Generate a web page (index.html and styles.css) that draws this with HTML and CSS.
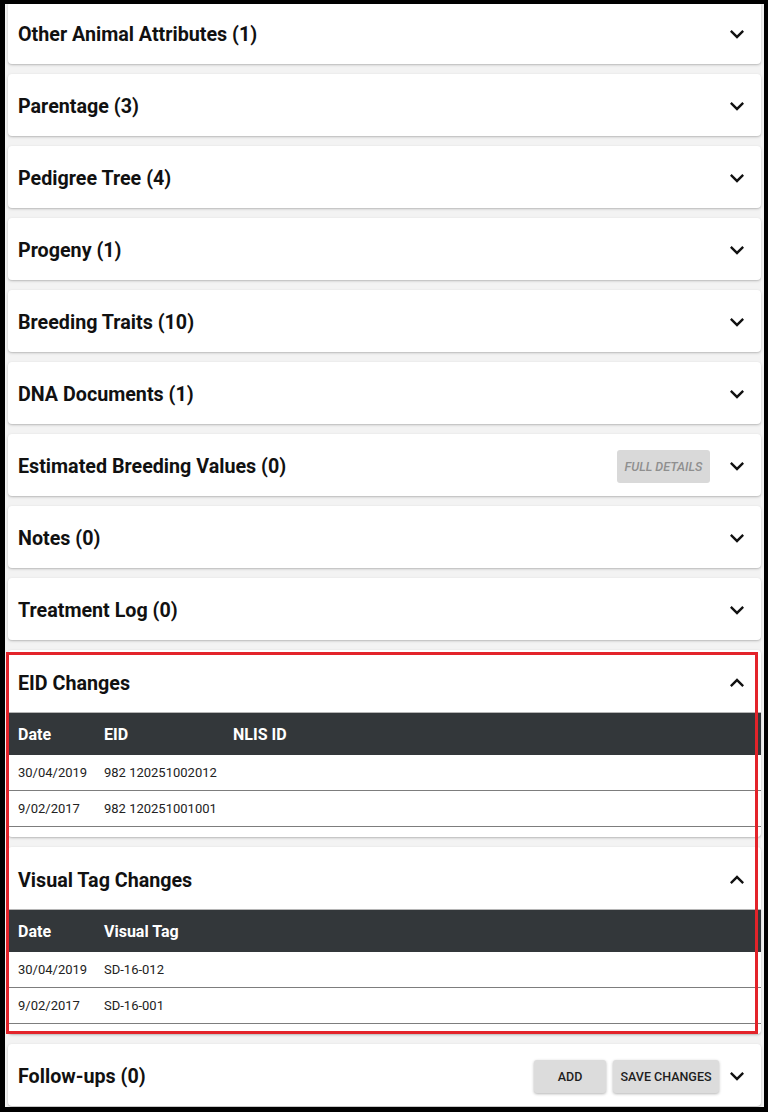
FILE: index.html
```html
<!DOCTYPE html>
<html lang="en">
<head>
<meta charset="utf-8">
<title>Animal details</title>
<link rel="stylesheet" href="styles.css">
</head>
<body>
<div class="screen">
  <div class="list">
    <section class="panel"><div class="summary"><h2 class="title">Other Animal Attributes (1)</h2><svg class="chev" viewBox="0 0 24 24"><path d="M16.59 8.59L12 13.17 7.41 8.59 6 10l6 6 6-6z"/></svg></div></section>
    <section class="panel"><div class="summary"><h2 class="title">Parentage (3)</h2><svg class="chev" viewBox="0 0 24 24"><path d="M16.59 8.59L12 13.17 7.41 8.59 6 10l6 6 6-6z"/></svg></div></section>
    <section class="panel"><div class="summary"><h2 class="title">Pedigree Tree (4)</h2><svg class="chev" viewBox="0 0 24 24"><path d="M16.59 8.59L12 13.17 7.41 8.59 6 10l6 6 6-6z"/></svg></div></section>
    <section class="panel"><div class="summary"><h2 class="title">Progeny (1)</h2><svg class="chev" viewBox="0 0 24 24"><path d="M16.59 8.59L12 13.17 7.41 8.59 6 10l6 6 6-6z"/></svg></div></section>
    <section class="panel"><div class="summary"><h2 class="title">Breeding Traits (10)</h2><svg class="chev" viewBox="0 0 24 24"><path d="M16.59 8.59L12 13.17 7.41 8.59 6 10l6 6 6-6z"/></svg></div></section>
    <section class="panel"><div class="summary"><h2 class="title">DNA Documents (1)</h2><svg class="chev" viewBox="0 0 24 24"><path d="M16.59 8.59L12 13.17 7.41 8.59 6 10l6 6 6-6z"/></svg></div></section>
    <section class="panel"><div class="summary"><h2 class="title">Estimated Breeding Values (0)</h2><button class="btn btn-disabled btn-full">FULL DETAILS</button><svg class="chev" viewBox="0 0 24 24"><path d="M16.59 8.59L12 13.17 7.41 8.59 6 10l6 6 6-6z"/></svg></div></section>
    <section class="panel"><div class="summary"><h2 class="title">Notes (0)</h2><svg class="chev" viewBox="0 0 24 24"><path d="M16.59 8.59L12 13.17 7.41 8.59 6 10l6 6 6-6z"/></svg></div></section>
    <section class="panel"><div class="summary"><h2 class="title">Treatment Log (0)</h2><svg class="chev" viewBox="0 0 24 24"><path d="M16.59 8.59L12 13.17 7.41 8.59 6 10l6 6 6-6z"/></svg></div></section>

    <div class="group">
      <section class="panel panel-open">
        <div class="summary summary-open"><h2 class="title">EID Changes</h2><svg class="chev" viewBox="0 0 24 24"><path d="M12 8l-6 6 1.41 1.41L12 10.83l4.59 4.58L18 14z"/></svg></div>
        <table class="grid">
          <thead><tr><th class="c-date">Date</th><th class="c-eid">EID</th><th>NLIS ID</th></tr></thead>
          <tbody>
            <tr><td>30/04/2019</td><td>982 120251002012</td><td></td></tr>
            <tr><td>9/02/2017</td><td>982 120251001001</td><td></td></tr>
          </tbody>
        </table>
      </section>
      <section class="panel panel-open">
        <div class="summary summary-open"><h2 class="title">Visual Tag Changes</h2><svg class="chev" viewBox="0 0 24 24"><path d="M12 8l-6 6 1.41 1.41L12 10.83l4.59 4.58L18 14z"/></svg></div>
        <table class="grid">
          <thead><tr><th class="c-date">Date</th><th>Visual Tag</th></tr></thead>
          <tbody>
            <tr><td>30/04/2019</td><td>SD-16-012</td></tr>
            <tr><td>9/02/2017</td><td>SD-16-001</td></tr>
          </tbody>
        </table>
      </section>
      <div class="highlight"></div>
    </div>

    <section class="panel"><div class="summary"><h2 class="title">Follow-ups (0)</h2><button class="btn btn-raised">ADD</button><button class="btn btn-raised btn-save">SAVE CHANGES</button><svg class="chev" viewBox="0 0 24 24"><path d="M16.59 8.59L12 13.17 7.41 8.59 6 10l6 6 6-6z"/></svg></div></section>
  </div>
</div>
</body>
</html>
```
FILE: styles.css
```css
html, body {
  margin: 0;
  padding: 0;
  background: #000;
}
body {
  font-family: Roboto, "Liberation Sans", Arial, sans-serif;
  color: #1a1a1a;
}
.screen {
  margin: 4px 4px 0 5px;
  height: 1103px;
  overflow: hidden;
  background: #f3f3f3;
  padding: 0 3px;
}
.list {
  display: flex;
  flex-direction: column;
  gap: 10px;
  margin-top: -2px;
}
.panel {
  background: #fff;
  border-radius: 4px;
  box-shadow: 0 1px 3px rgba(0,0,0,0.18), 0 1px 1px rgba(0,0,0,0.08);
}
.summary {
  height: 62px;
  display: flex;
  align-items: center;
  padding: 2px 10px 0 10px;
  box-sizing: border-box;
}
.summary-open {
  padding-top: 4px;
}
.title {
  flex: 1;
  margin: 0;
  font-size: 19.7px;
  font-weight: 700;
  color: #111;
  letter-spacing: 0;
}
.chev {
  width: 28px;
  height: 28px;
  fill: #111;
  flex: none;
}
.btn {
  font-family: Roboto, "Liberation Sans", Arial, sans-serif;
  font-size: 12.5px;
  font-weight: 500;
  height: 33px;
  border: none;
  border-radius: 3px;
  padding: 0 6px;
  margin-right: 4px;
}
.btn-disabled {
  background: #d9d9d9;
  color: #8f8f8f;
  font-style: italic;
  width: 93px;
}
.btn-full {
  margin-right: 13px;
}
.btn-raised {
  background: #dcdcdc;
  color: #1e1e1e;
  box-shadow: 0 1px 3px rgba(0,0,0,0.3);
  width: 72px;
}
.btn-save {
  width: 106px;
  margin-left: 3px;
}
.group {
  position: relative;
  display: flex;
  flex-direction: column;
  gap: 10px;
}
.panel-open {
  padding-bottom: 10px;
}
.grid {
  width: 100%;
  border-collapse: collapse;
  border-top: 1px solid #b5b5b5;
}
.grid th {
  background: #33373a;
  color: #fff;
  font-size: 16px;
  font-weight: 700;
  text-align: left;
  height: 42px;
  padding: 0 0 0 10px;
}
.grid td {
  font-size: 13px;
  color: #222;
  height: 35px;
  padding: 0 0 0 10px;
  border-bottom: 1px solid #7d7d7d;
}
.c-date {
  width: 76px;
}
.c-eid {
  width: 119px;
}
.highlight {
  position: absolute;
  left: -2px;
  top: 2px;
  width: 752px;
  height: 382px;
  box-sizing: border-box;
  border: 3px solid #e3232a;
  pointer-events: none;
}
```
